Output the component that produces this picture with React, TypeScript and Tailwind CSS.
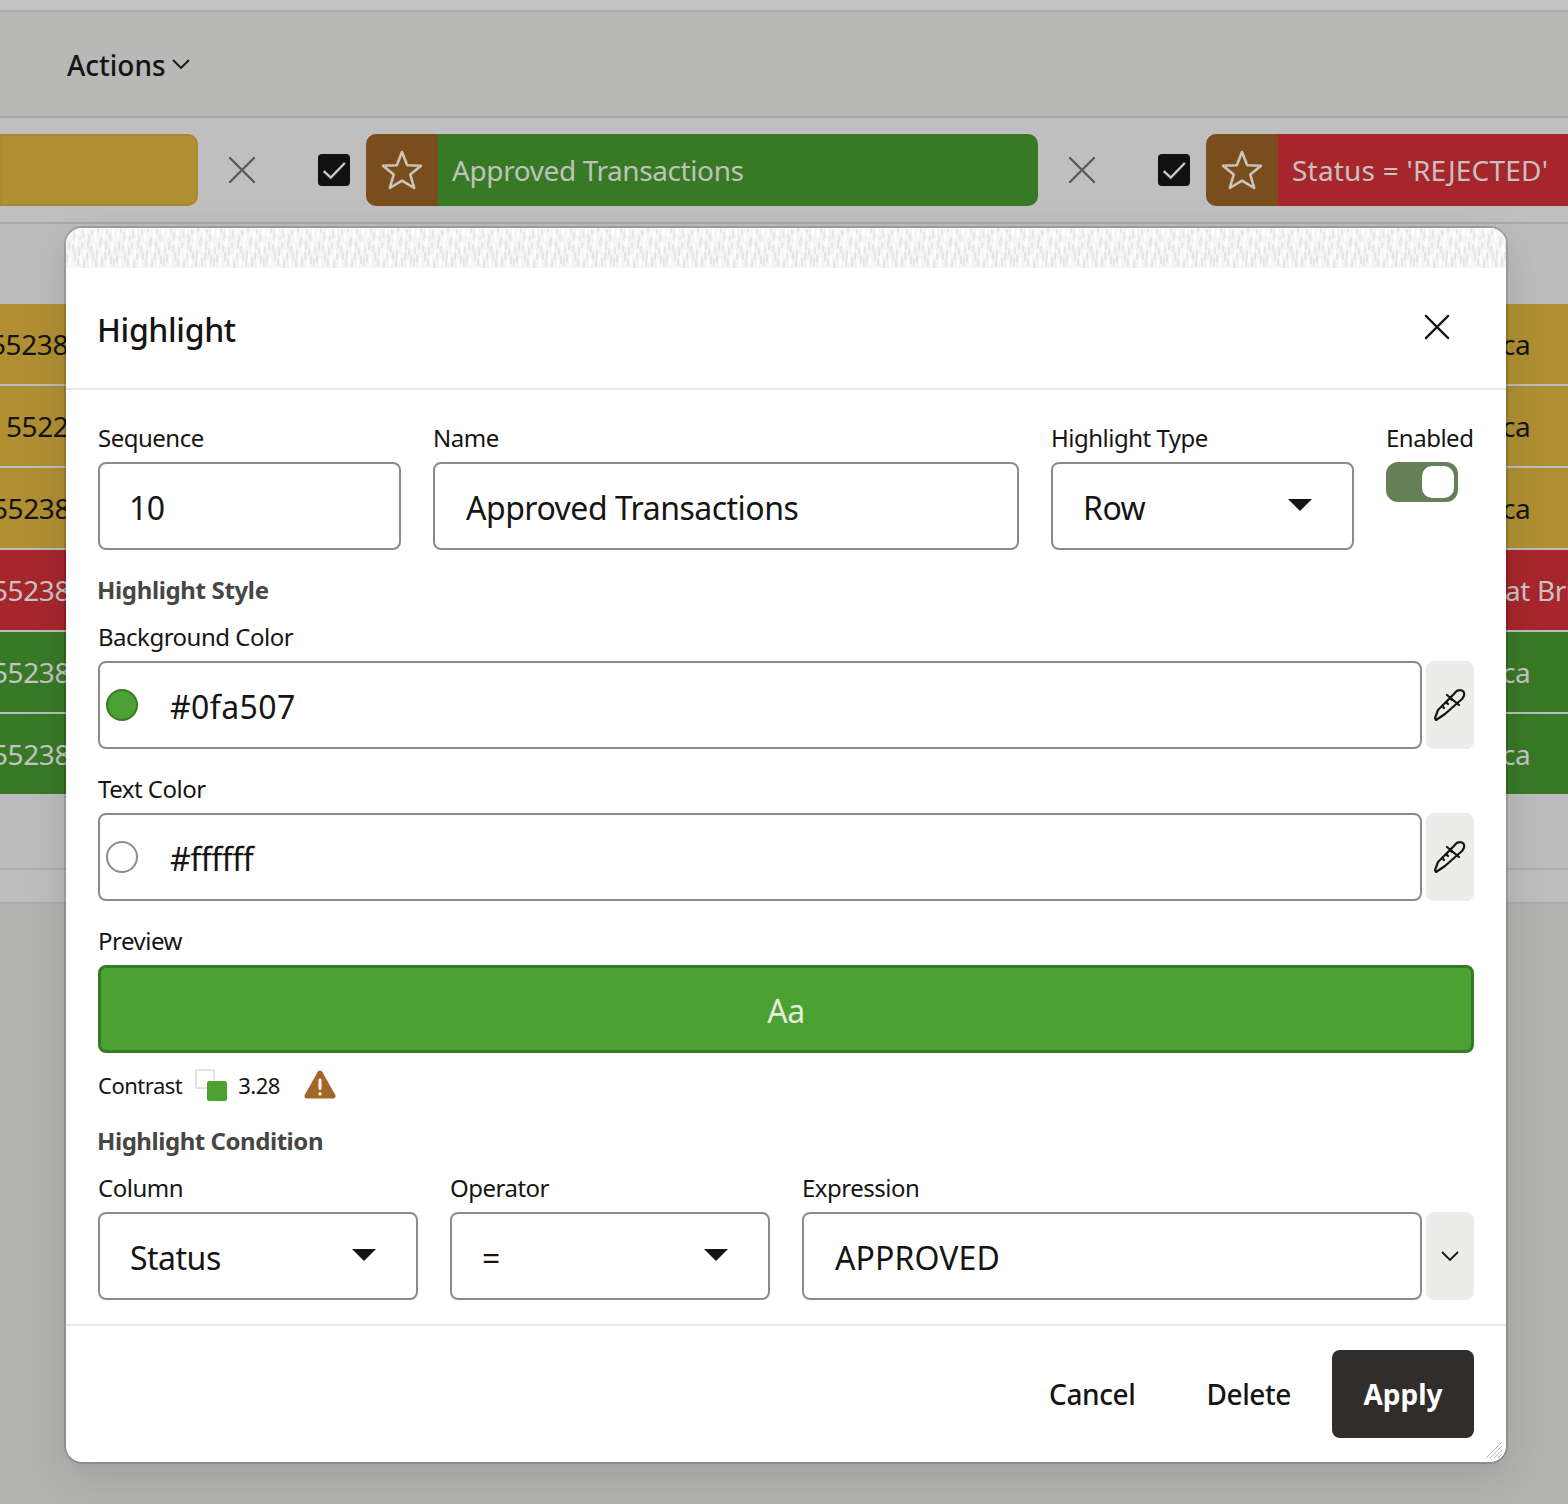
import { ReactNode } from "react";

const FONT = "font-['Noto_Sans','Open_Sans',sans-serif]";

// rows that sit behind the dialog
const rows = [
  { bg: "bg-[#b08f33]", text: "text-[#141414]", left: "55238", offset: "ml-[-10px]", right: "ca", pad: "" },
  { bg: "bg-[#b08f33]", text: "text-[#141414]", left: "55225", offset: "ml-[6px]", right: "ca", pad: "" },
  { bg: "bg-[#b08f33]", text: "text-[#141414]", left: "55238", offset: "ml-[-8px]", right: "ca", pad: "" },
  { bg: "bg-[#a7262c]", text: "text-[#c4c4c4]", left: "55238", offset: "ml-[-8px]", right: "at Britain", pad: "pl-[3px]" },
  { bg: "bg-[#387926]", text: "text-[#c4c4c4]", left: "55238", offset: "ml-[-8px]", right: "ca", pad: "" },
  { bg: "bg-[#387926]", text: "text-[#c4c4c4]", left: "55238", offset: "ml-[-8px]", right: "ca", pad: "" },
];

const noise = [
  [1, 2, 7], [4, 0, 5], [7, 4, 9], [10, 1, 6], [13, 8, 5], [16, 3, 7], [19, 0, 6], [22, 7, 8],
  [25, 2, 5], [28, 5, 9], [31, 0, 4], [34, 9, 6], [37, 3, 8], [40, 1, 5], [43, 6, 7], [46, 0, 8],
  [2, 13, 9], [6, 17, 7], [9, 11, 8], [12, 19, 9], [15, 14, 6], [18, 21, 8], [21, 12, 9], [24, 18, 7],
  [27, 15, 6], [30, 22, 9], [33, 12, 7], [36, 17, 8], [39, 13, 9], [42, 20, 7], [45, 14, 8], [48, 19, 7],
  [0, 26, 9], [3, 30, 8], [8, 24, 9], [11, 31, 7], [14, 27, 9], [17, 32, 8], [20, 25, 7], [23, 30, 9],
  [26, 24, 8], [29, 31, 8], [32, 26, 9], [35, 30, 9], [38, 24, 8], [41, 32, 8], [44, 27, 9], [47, 30, 8],
];

function Close({ className }: { className: string }) {
  return (
    <svg viewBox="0 0 28 28" fill="none" stroke="currentColor" strokeWidth="2.4" strokeLinecap="round" className={className}>
      <path d="M2 2 L26 26 M26 2 L2 26" />
    </svg>
  );
}

function Chevron({ className }: { className?: string }) {
  return (
    <svg viewBox="0 0 18 10" fill="none" stroke="#161513" strokeWidth="1.8" className={`w-[18px] h-[10px] ${className ?? ""}`}>
      <path d="M1 1 L9 9 L17 1" />
    </svg>
  );
}

function StarIcon() {
  return (
    <svg viewBox="0 0 42 40" fill="none" stroke="#c9c5bd" strokeWidth="2.6" strokeLinejoin="round" className="w-[42px] h-[40px]">
      <path d="M21 2 L26.2 15.2 L40 15.8 L29.3 24.6 L33.2 38 L21 30.6 L8.8 38 L12.7 24.6 L2 15.8 L15.8 15.2 Z" />
    </svg>
  );
}

function Check() {
  return (
    <div className="w-[32px] h-[32px] rounded-[4px] bg-[#111110] flex items-center justify-center">
      <svg viewBox="0 0 24 24" fill="none" stroke="#c9c9c9" strokeWidth="2.2" className="w-[26px] h-[26px]">
        <path d="M2.5 13 L9 19 L22 5.5" />
      </svg>
    </div>
  );
}

function Pipette() {
  return (
    <svg viewBox="0 0 32 32" fill="none" stroke="#161513" strokeWidth="2.2" strokeLinejoin="round" strokeLinecap="round" className="w-[32px] h-[32px]">
      <path d="M1 29 L4 21 L20 5 C22 2 25 0.5 28 1.5 C31 3 31 6.5 28 10 L11 25 L2 31 Z" />
      <path d="M13 6 L25 16 M8 17 L10 19 M12 13 L14 15 M16 9 L18 11" />
    </svg>
  );
}

function Caret() {
  return (
    <svg viewBox="0 0 24 12" className="w-[24px] h-[12px]" fill="#161513">
      <path d="M0 0 H24 L12 12 Z" />
    </svg>
  );
}

function Label({ children }: { children: ReactNode }) {
  return <div className="text-[24px] leading-[24px] h-[24px] text-[#161513] tracking-[-0.5px] whitespace-nowrap">{children}</div>;
}

function Box({ className, children }: { className?: string; children: ReactNode }) {
  return (
    <div className={`h-[88px] pt-[4px] border-2 border-[#8d8c8a] rounded-[8px] bg-white flex items-center text-[32px] text-[#161513] ${className ?? "tracking-[-0.5px]"}`}>
      {children}
    </div>
  );
}

function SideButton({ children }: { children: ReactNode }) {
  return <div className="w-[48px] h-[88px] ml-[4px] rounded-[8px] bg-[#ececeb] flex items-center justify-center shrink-0">{children}</div>;
}

function Field({ label, className, children }: { label: string; className: string; children: ReactNode }) {
  return (
    <div className={`flex flex-col ${className}`}>
      <Label>{label}</Label>
      {children}
    </div>
  );
}

function SelectBox({ value }: { value: string }) {
  return (
    <Box className="mt-[12px] px-[30px] justify-between tracking-[-0.5px]">
      <span>{value}</span>
      <span className="mr-[10px] mb-[6px] flex"><Caret /></span>
    </Box>
  );
}

function ColorRow({ label, value, dot, top, spacing }: { label: string; value: string; dot: string; top: string; spacing: string }) {
  return (
    <div className={`flex flex-col ${top}`}>
      <Label>{label}</Label>
      <div className="flex mt-[12px]">
        <Box className={`flex-1 pl-[6px] ${spacing}`}>
          <span className={`w-[32px] h-[32px] mt-[-4px] rounded-full border-2 mr-[32px] ${dot}`} />
          <span>{value}</span>
        </Box>
        <SideButton><Pipette /></SideButton>
      </div>
    </div>
  );
}

function Chip({ name, color, width }: { name: string; color: string; width: string }) {
  return (
    <div className={`flex h-[72px] rounded-l-[10px] overflow-hidden shrink-0 ${width}`}>
      <div className="w-[72px] bg-[#794e1c] flex items-center justify-center"><StarIcon /></div>
      <div className={`flex-1 flex items-center pl-[14px] text-[28px] whitespace-nowrap ${color}`}>{name}</div>
    </div>
  );
}

export default function App() {
  return (
    <div className={`relative w-[1568px] h-[1504px] overflow-hidden bg-[#b2b2b0] ${FONT}`}>
      <div className="h-[10px] bg-[#c2c2c2]" />
      <div className="h-[2px] bg-[#adadad]" />
      <div className="h-[104px] pt-[2px] bg-[#b8b8b6] flex items-center pl-[67px] text-[28px] font-medium text-[#141414]">
        Actions
        <Chevron className="ml-[6px] mt-[-2px]" />
      </div>
      <div className="h-[2px] bg-[#a9a9a7]" />
      <div className="h-[104px] bg-[#bfbfbf] flex items-center">
        <div className="w-[198px] h-[72px] bg-[#b08f33] border-2 border-[#a98a30] rounded-r-[10px] shrink-0" />
        <div className="ml-[30px] mr-[62px] text-[#5a5a5a]"><Close className="w-[28px] h-[28px]" /></div>
        <Check />
        <div className="w-[16px]" />
        <Chip name="Approved Transactions" color="bg-[#387926] text-[#bcc4b8] tracking-[-0.4px]" width="w-[672px] rounded-r-[10px]" />
        <div className="ml-[30px] mr-[62px] text-[#5a5a5a]"><Close className="w-[28px] h-[28px]" /></div>
        <Check />
        <div className="w-[16px]" />
        <Chip name="Status = 'REJECTED'" color="bg-[#a7262c] text-[#c9c0c0] tracking-[0.2px]" width="w-[362px]" />
      </div>
      <div className="h-[2px] bg-[#aaaaaa]" />
      <div className="h-[80px] bg-[#bcbcbc]" />

      {rows.map((row, i) => (
        <div key={i} className={`h-[82px] border-b-2 border-[#bcbcbc] flex items-center justify-between overflow-hidden text-[28px] tracking-[-0.4px] ${row.bg} ${row.text}`}>
          <span className={row.offset}>{row.left}</span>
          <span className={`w-[66px] whitespace-nowrap overflow-hidden shrink-0 ${row.pad}`}>{row.right}</span>
        </div>
      ))}
      <div className="h-[72px] bg-[#bcbcbc]" />
      <div className="h-[2px] bg-[#adadad]" />
      <div className="h-[32px] bg-[#bdbdbd]" />
      <div className="h-[2px] bg-[#adabaa]" />

      <div className="absolute left-[66px] top-[228px] w-[1440px] h-[1234px] bg-white rounded-[16px] overflow-hidden shadow-[0_0_0_2px_rgba(0,0,0,0.14),0_12px_40px_rgba(0,0,0,0.12)] flex flex-col">
        <svg className="w-full h-[40px] shrink-0 bg-[#f5f5f5]">
          <defs>
            <pattern id="grain" width="50" height="40" patternUnits="userSpaceOnUse">
              {noise.map(([x, y, h], i) => (
                <rect key={i} x={x} y={y} width="2.2" height={h} rx="1" fill={i % 3 === 0 ? "#ffffff" : "#e6e6e6"} />
              ))}
            </pattern>
          </defs>
          <rect width="100%" height="40" fill="url(#grain)" />
        </svg>

        <div className="h-[122px] pt-[4px] shrink-0 border-b-2 border-[#e8e8e7] flex items-center justify-between pl-[32px] pr-[56px]">
          <div className="ml-[-1px] text-[32px] font-medium text-[#161513] tracking-[-0.35px]">Highlight</div>
          <div className="text-[#161513] mb-[6px]"><Close className="w-[26px] h-[26px]" /></div>
        </div>

        <div className="px-[32px] pt-[36px] flex-1 flex flex-col">
          <div className="flex gap-[32px]">
            <Field label="Sequence" className="w-[303px]">
              <Box className="mt-[12px] pl-[29px] pr-[30px] tracking-[-0.5px]">10</Box>
            </Field>
            <Field label="Name" className="w-[586px]">
              <Box className="mt-[12px] px-[31px] tracking-[-0.5px]">Approved Transactions</Box>
            </Field>
            <Field label="Highlight Type" className="w-[303px]">
              <SelectBox value="Row" />
            </Field>
            <Field label="Enabled" className="w-[88px]">
              <div className="mt-[12px] w-[72px] h-[40px] rounded-[12px] bg-[#667f57] flex justify-end p-[4px]">
                <span className="w-[32px] h-[32px] rounded-[10px] bg-white" />
              </div>
            </Field>
          </div>

          <div className="mt-[28px] ml-[-1px] text-[24px] leading-[24px] font-bold text-[#474645] tracking-[-0.35px]">Highlight Style</div>
          <ColorRow label="Background Color" value="#0fa507" dot="bg-[#4ba232] border-[#387926]" top="mt-[23px]" spacing="tracking-[0.4px]" />
          <ColorRow label="Text Color" value="#ffffff" dot="bg-white border-[#8d8c8a]" top="mt-[28px]" spacing="tracking-[-0.5px]" />

          <div className="mt-[28px]"><Label>Preview</Label></div>
          <div className="mt-[12px] h-[88px] pt-[4px] rounded-[8px] bg-[#4ba232] border-[3px] border-[#387926] flex items-center justify-center text-[32px] text-[#e4ecdf] tracking-[-0.5px]">Aa</div>

          <div className="mt-[15px] h-[34px] flex items-center text-[22px] text-[#161513] tracking-[-0.5px]">
            <span>Contrast</span>
            <span className="relative w-[32px] h-[32px] ml-[13px]">
              <span className="absolute left-0 top-0 w-[20px] h-[20px] rounded-[2px] bg-white border-2 border-[#e4e4e4]" />
              <span className="absolute left-[12px] top-[12px] w-[20px] h-[20px] rounded-[2px] bg-[#4ba232]" />
            </span>
            <span className="ml-[11px]">3.28</span>
            <svg viewBox="0 0 32 31" className="w-[32px] h-[31px] ml-[24px] mt-[-2px]">
              <path d="M16 4 L29 27 H3 Z" fill="#a56727" stroke="#a56727" strokeWidth="5" strokeLinejoin="round" />
              <path d="M16 11 V19.5 M16 24.5 V25" stroke="#ffffff" strokeWidth="3" strokeLinecap="round" />
            </svg>
          </div>

          <div className="mt-[27px] ml-[-1px] text-[24px] leading-[24px] font-bold text-[#474645] tracking-[-0.45px]">Highlight Condition</div>

          <div className="mt-[23px] flex gap-[32px]">
            <Field label="Column" className="w-[320px]"><SelectBox value="Status" /></Field>
            <Field label="Operator" className="w-[320px]"><SelectBox value="=" /></Field>
            <Field label="Expression" className="flex-1">
              <div className="flex mt-[12px]">
                <Box className="flex-1 px-[31px] tracking-[0.1px]">APPROVED</Box>
                <SideButton><Chevron /></SideButton>
              </div>
            </Field>
          </div>
        </div>

        <div className="relative h-[138px] shrink-0 border-t-2 border-[#e8e8e7] flex items-start justify-end pt-[24px] pr-[32px] text-[28px] font-medium text-[#161513] tracking-[-0.4px]">
          <div className="h-[88px] pr-[35px] flex items-center">Cancel</div>
          <div className="h-[88px] pl-[36px] pr-[41px] flex items-center">Delete</div>
          <div className="h-[88px] w-[142px] rounded-[8px] bg-[#312d2a] text-white font-bold tracking-normal flex items-center justify-center">Apply</div>
          <svg viewBox="0 0 16 16" className="absolute right-[4px] bottom-[4px] w-[16px] h-[16px]" stroke="#b5b5b5" strokeWidth="1">
            <path d="M0 16 L16 0 M4 16 L16 4 M8 16 L16 8 M12 16 L16 12" />
          </svg>
        </div>
      </div>
    </div>
  );
}
